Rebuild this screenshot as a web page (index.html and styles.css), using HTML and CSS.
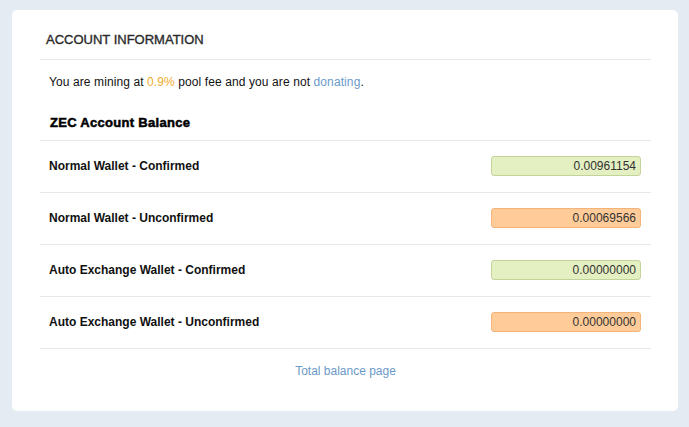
FILE: index.html
```html
<!DOCTYPE html>
<html>
<head>
<meta charset="utf-8">
<link rel="stylesheet" href="styles.css">
</head>
<body>
<div class="card">
  <div class="card-header">ACCOUNT INFORMATION</div>
  <p class="info">You are mining at <span class="fee">0.9%</span> pool fee and you are not <a class="link" href="#">donating</a>.</p>
  <h3 class="subtitle">ZEC Account Balance</h3>
  <div class="rows">
    <div class="row"><span class="label">Normal Wallet - Confirmed</span><span class="value green">0.00961154</span></div>
    <div class="row"><span class="label">Normal Wallet - Unconfirmed</span><span class="value orange">0.00069566</span></div>
    <div class="row"><span class="label">Auto Exchange Wallet - Confirmed</span><span class="value green">0.00000000</span></div>
    <div class="row"><span class="label">Auto Exchange Wallet - Unconfirmed</span><span class="value orange">0.00000000</span></div>
  </div>
  <div class="footer"><a class="link" href="#">Total balance page</a></div>
</div>
</body>
</html>
```
FILE: styles.css
```css
html, body {
  margin: 0;
  padding: 0;
  background: #e4ebf2;
  font-family: "Liberation Sans", Arial, sans-serif;
  color: #111;
}
body {
  padding: 10px 11px 16px 12px;
}
.card {
  background: #fff;
  border-radius: 5px;
  width: 666px;
  height: 401px;
  box-sizing: border-box;
  padding: 0 27px 0 28px;
}
.card-header {
  height: 50px;
  box-sizing: border-box;
  border-bottom: 1px solid #e6e9ec;
  padding: 22px 0 0 6px;
  font-size: 13px;
  color: #2a2a2a;
  line-height: 16px;
  -webkit-text-stroke: 0.35px #2a2a2a;
}
.info {
  margin: 0;
  padding: 15px 0 0 9px;
  font-size: 12px;
  line-height: 14px;
  height: 27px;
  letter-spacing: 0.1px;
}
.fee { color: #f0ad2e; }
.link { color: #6b9ac7; text-decoration: none; }
.subtitle {
  margin: 0;
  padding: 13px 0 0 10px;
  height: 39px;
  box-sizing: border-box;
  font-size: 13px;
  font-weight: bold;
  line-height: 15px;
  color: #000;
  border-bottom: 1px solid #e6e9ec;
  letter-spacing: 0.3px;
  -webkit-text-stroke: 0.5px #000;
}
.row {
  height: 52px;
  box-sizing: border-box;
  border-bottom: 1px solid #e6e9ec;
  display: flex;
  align-items: center;
  justify-content: space-between;
  padding: 0 10px 1px 9px;
}
.label {
  font-size: 12px;
  font-weight: bold;
  color: #111;
}
.value {
  width: 150px;
  height: 20px;
  box-sizing: border-box;
  border-radius: 3px;
  font-size: 12px;
  line-height: 18px;
  text-align: right;
  padding-right: 4px;
  color: #333;
}
.green { background: #e4efc2; border: 1px solid #c3d49a; }
.orange { background: #ffcc99; border: 1px solid #f2b47a; }
.footer {
  text-align: center;
  font-size: 12px;
  padding-top: 15px;
  line-height: 14px;
}
```
